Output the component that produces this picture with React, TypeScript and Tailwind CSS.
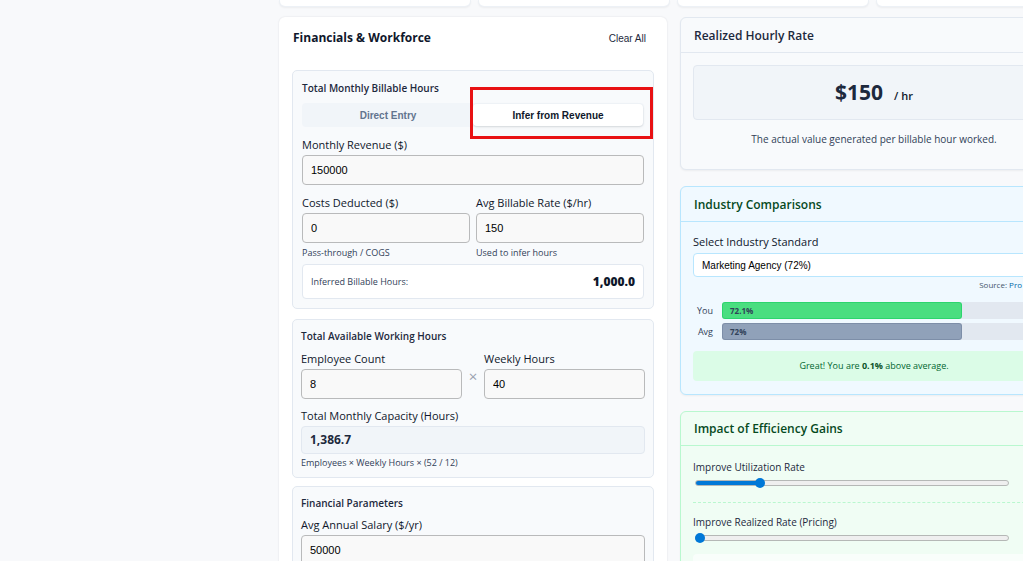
import { useState, type CSSProperties, type ReactNode } from "react";

interface FieldProps {
  id: string;
  label: string;
  value: string;
  hint?: string;
}

function Field({ id, label, value, hint }: FieldProps) {
  return (
    <div className="min-w-0 flex-1">
      <label htmlFor={id} className="block text-[11px] leading-5 font-medium text-slate-900">
        {label}
      </label>
      <input
        id={id}
        type="text"
        defaultValue={value}
        className="block h-[30px] w-full rounded-[4px] border border-[#b9babb] bg-[#f9f9f9] px-2 font-['Liberation_Sans',sans-serif] text-[11px] text-black"
      />
      {hint && <p className="text-[9px] leading-5 text-slate-700">{hint}</p>}
    </div>
  );
}

interface SliderProps {
  id: string;
  label: string;
  initial: number;
}

function Slider({ id, label, initial }: SliderProps) {
  const [value, setValue] = useState(initial);
  return (
    <div>
      <label htmlFor={id} className="block text-[10px] leading-5 text-slate-800">
        {label}
      </label>
      <div className="pr-[46px] pl-0.5">
        <input
          id={id}
          type="range"
          min={0}
          max={25}
          value={value}
          onChange={(e) => setValue(Number(e.target.value))}
          style={{ "--fill": `${(value / 25) * 100}%` } as CSSProperties}
          className="block h-3 w-full appearance-none bg-transparent [&::-webkit-slider-runnable-track]:h-1.5 [&::-webkit-slider-runnable-track]:rounded-full [&::-webkit-slider-runnable-track]:border [&::-webkit-slider-runnable-track]:border-[#b5b8b6] [&::-webkit-slider-runnable-track]:bg-[#efefef] [&::-webkit-slider-runnable-track]:bg-[linear-gradient(to_right,#0078d7_var(--fill),transparent_var(--fill))] [&::-webkit-slider-runnable-track]:bg-origin-border [&::-webkit-slider-thumb]:-mt-[3px] [&::-webkit-slider-thumb]:-ml-px [&::-webkit-slider-thumb]:size-[10px] [&::-webkit-slider-thumb]:appearance-none [&::-webkit-slider-thumb]:rounded-full [&::-webkit-slider-thumb]:bg-[#0078d7]"
        />
      </div>
    </div>
  );
}

function Section({ title, className, children }: { title: string; className: string; children: ReactNode }) {
  return (
    <section className={`rounded-[5px] border border-slate-200 bg-slate-50 ${className}`}>
      <h3 className="text-[10px] leading-4 font-semibold text-slate-800">{title}</h3>
      {children}
    </section>
  );
}

const bars = [
  { name: "You", value: 72.1, color: "border-green-500/40 bg-[#4ade80]" },
  { name: "Avg", value: 72, color: "border-slate-500/40 bg-slate-400" },
];

function Financials() {
  const [mode, setMode] = useState("infer");
  const idle = "text-slate-500";
  const active = "bg-white text-slate-900 shadow-sm";
  return (
    <div className="rounded-md bg-white px-[13px] pt-2 shadow-[0_0_2px_rgba(15,23,42,0.12)]">
      <div className="mb-[19px] flex h-[26px] items-center justify-between pr-2 pl-px">
        <h2 className="text-[12px] font-bold text-slate-900">Financials &amp; Workforce</h2>
        <button type="button" className="font-['Liberation_Sans',sans-serif] text-[10px] text-slate-800">
          Clear All
        </button>
      </div>

      <Section title="Total Monthly Billable Hours" className="px-[9px] py-[9px]">
        <div className="relative mt-[7px] mb-2 grid h-6 grid-cols-2 rounded bg-slate-100 p-px font-['Liberation_Sans',sans-serif] text-[10px] font-bold">
          <button type="button" onClick={() => setMode("direct")} className={`rounded ${mode === "direct" ? active : idle}`}>
            Direct Entry
          </button>
          <button type="button" onClick={() => setMode("infer")} className={`rounded ${mode === "infer" ? active : idle}`}>
            Infer from Revenue
          </button>
          {/* highlight around the active mode */}
          <div className="pointer-events-none absolute -top-4 -right-[9px] left-[168px] h-[52px] border-[3px] border-[#e81113]" />
        </div>
        <Field id="revenue" label="Monthly Revenue ($)" value="150000" />
        <div className="mt-2 flex gap-1.5">
          <Field id="costs" label="Costs Deducted ($)" value="0" hint="Pass-through / COGS" />
          <Field id="rate" label="Avg Billable Rate ($/hr)" value="150" hint="Used to infer hours" />
        </div>
        <div className="mt-px flex h-[35px] items-center justify-between rounded-[4px] border border-slate-200 bg-white px-2">
          <span className="text-[9px] text-slate-700">Inferred Billable Hours:</span>
          <strong className="text-[12px] font-extrabold text-slate-900">1,000.0</strong>
        </div>
      </Section>

      <Section title="Total Available Working Hours" className="mt-[10px] px-2 pt-2 pb-[5px]">
        <div className="mt-[5px] flex">
          <Field id="employees" label="Employee Count" value="8" />
          <span className="w-[22px] pt-[17px] text-center text-[15px] leading-5 text-gray-400">×</span>
          <Field id="weekly" label="Weekly Hours" value="40" />
        </div>
        <p className="mt-[7px] text-[11px] leading-5 font-medium text-slate-900">Total Monthly Capacity (Hours)</p>
        <div className="flex h-7 items-center rounded-[4px] border border-slate-200 bg-slate-100 px-2 text-[12px] font-bold text-slate-800">
          1,386.7
        </div>
        <p className="text-[9px] leading-[18px] text-slate-700">Employees × Weekly Hours × (52 / 12)</p>
      </Section>

      <Section title="Financial Parameters" className="mt-2 px-2 py-2">
        <div className="mt-1">
          <Field id="salary" label="Avg Annual Salary ($/yr)" value="50000" />
        </div>
      </Section>
    </div>
  );
}

function Results() {
  return (
    <div className="flex flex-col gap-4">
      <section className="rounded-md border border-slate-200 bg-slate-50 shadow-xs">
        <h2 className="border-b border-slate-200 px-[13px] pt-[9px] pb-[7px] text-[12px] leading-[18px] font-semibold text-slate-800">
          Realized Hourly Rate
        </h2>
        <div className="px-3 pt-3 pb-5">
          <div className="flex h-[55px] items-center justify-center rounded-[4px] border border-slate-200 bg-slate-100">
            <p className="flex items-baseline gap-[11px]">
              <strong className="text-[21px] font-bold text-slate-800">$150</strong>
              <span className="text-[11px] font-semibold text-slate-900">/ hr</span>
            </p>
          </div>
          <p className="mt-[9px] text-center text-[10px] leading-5 text-slate-700">
            The actual value generated per billable hour worked.
          </p>
        </div>
      </section>

      <section className="rounded-md border border-sky-200 bg-[#f0f9ff] shadow-xs">
        <h2 className="border-b border-sky-200 px-[13px] pt-[9px] pb-[7px] text-[12px] leading-[18px] font-semibold text-[#064a1e]">
          Industry Comparisons
        </h2>
        <div className="px-3 pt-[10px] pb-[13px]">
          <label htmlFor="industry" className="block text-[11px] leading-5 font-medium text-slate-900">
            Select Industry Standard
          </label>
          <select
            id="industry"
            className="mt-px block h-6 w-full appearance-none rounded-[4px] border border-sky-200 bg-white px-2 font-['Liberation_Sans',sans-serif] text-[10px] text-black"
          >
            <option>Marketing Agency (72%)</option>
          </select>
          <p className="pr-[33px] text-right text-[8px] leading-4 text-slate-600">
            Source:{" "}
            <a href="#source" className="text-sky-700">
              Pro
            </a>
          </p>
          <div className="mt-[9px] flex flex-col gap-1">
            {bars.map(({ name, value, color }) => (
              <div key={name} className="flex h-[17px] items-center gap-[9px]">
                <span className="w-5 text-right text-[9px] text-slate-700">{name}</span>
                <div className="h-full flex-1 rounded-[3px] bg-slate-200">
                  <div
                    className={`flex h-full items-center rounded-[3px] border px-[7px] text-[8px] font-bold text-slate-700 ${color}`}
                    style={{ width: `${value}%` }}
                  >
                    {value}%
                  </div>
                </div>
              </div>
            ))}
          </div>
          <p className="mt-[11px] rounded-[4px] bg-green-100 text-center text-[9px] leading-[30px] text-green-800">
            Great! You are <strong className="font-bold text-green-900">0.1%</strong> above average.
          </p>
        </div>
      </section>

      <section className="rounded-md border border-green-200 bg-[#f0fdf4] shadow-xs">
        <h2 className="border-b border-green-200 px-[13px] py-2 text-[12px] leading-[17px] font-semibold text-[#064a1e]">
          Impact of Efficiency Gains
        </h2>
        <div className="px-3 pt-[11px] pb-3">
          <Slider id="utilization" label="Improve Utilization Rate" initial={5} />
          <div className="mt-[13px] border-t border-dashed border-green-200 pt-[9px]">
            <Slider id="pricing" label="Improve Realized Rate (Pricing)" initial={0} />
          </div>
          <div className="mt-[10px] h-16 rounded-[4px] bg-white/60" />
        </div>
      </section>
    </div>
  );
}

export default function App() {
  return (
    <div className="h-screen overflow-hidden bg-[#f8f9fb] font-['Open_Sans',sans-serif] text-slate-800">
      {/* the dashboard runs on past the right edge */}
      <main className="-mr-[45px] ml-[279px]">
        <div className="grid grid-cols-4 gap-[7px]">
          {[0, 1, 2, 3].map((card) => (
            <div key={card} className="h-[7px] rounded-b-md border border-t-0 border-slate-200/60 bg-white shadow-xs" />
          ))}
        </div>
        <div className="mt-[10px] grid grid-cols-2 items-start gap-[13px]">
          <Financials />
          <Results />
        </div>
      </main>
    </div>
  );
}
